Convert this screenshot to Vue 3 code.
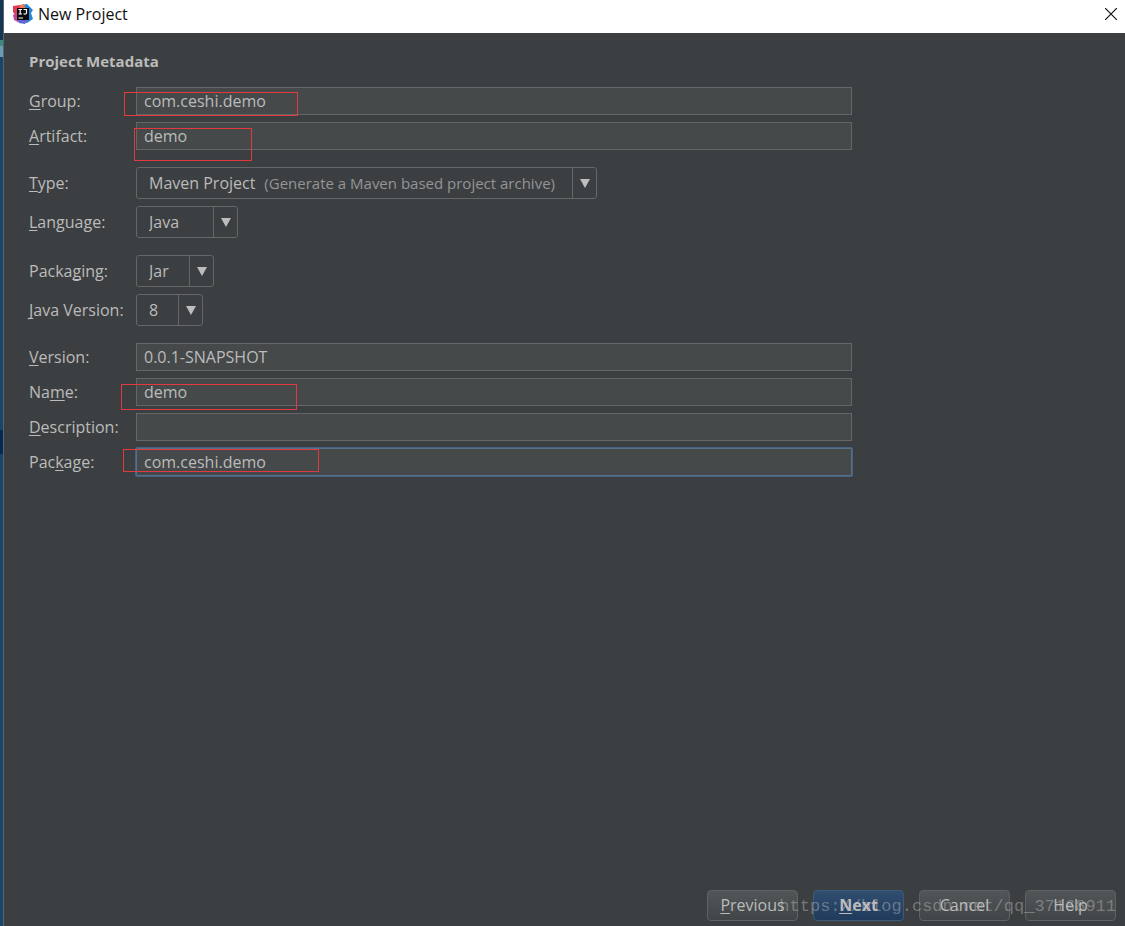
<script setup>
import { reactive } from 'vue'

const form = reactive({
  group: 'com.ceshi.demo',
  artifact: 'demo',
  type: 'Maven Project',
  language: 'Java',
  packaging: 'Jar',
  javaVersion: '8',
  version: '0.0.1-SNAPSHOT',
  name: 'demo',
  description: '',
  pkg: 'com.ceshi.demo',
})

// Each label is split as [before, mnemonic, after].
const sections = [
  [
    { key: 'group', label: ['', 'G', 'roup:'], mark: 'mark-group' },
    { key: 'artifact', label: ['', 'A', 'rtifact:'], mark: 'mark-artifact' },
  ],
  [
    { key: 'type', label: ['', 'T', 'ype:'], size: 'wide', options: ['Maven Project', 'Gradle Project'], note: '(Generate a Maven based project archive)' },
    { key: 'language', label: ['', 'L', 'anguage:'], size: 'medium', options: ['Java', 'Kotlin', 'Groovy'] },
  ],
  [
    { key: 'packaging', label: ['Packa', 'g', 'ing:'], size: 'small', options: ['Jar', 'War'] },
    { key: 'javaVersion', label: ['', 'J', 'ava Version:'], size: 'tiny', options: ['8', '10', '11'] },
  ],
  [
    { key: 'version', label: ['', 'V', 'ersion:'] },
    { key: 'name', label: ['Na', 'm', 'e:'], mark: 'mark-name' },
    { key: 'description', label: ['', 'D', 'escription:'] },
    { key: 'pkg', label: ['Pac', 'k', 'age:'], mark: 'mark-package', active: true },
  ],
]
</script>

<template>
  <div class="desktop">
    <div class="window">
      <header class="titlebar">
        <svg class="logo" viewBox="0 0 20 20" aria-hidden="true">
          <path d="M0 2 7 1 10 5 8 12 3 12 0 8Z" fill="#e23b58" />
          <path d="M8 1 14 0 20 6 18 9 20 15 14 19 8 17Z" fill="#2486dd" />
          <path d="M0 11 5 8 9 17 7 19 1 16Z" fill="#c2479a" />
          <path d="M7 1 11 0 13 6 6 7Z" fill="#f27a52" />
          <path d="M4 15H15L12 20 6 19Z" fill="#6863d5" />
          <rect x="4" y="4" width="12" height="12" fill="#090909" />
          <path d="M5.5 5.5H9M7.2 5.5V10M5.5 10H9M10.5 5.5H13.5V9Q13.5 10.2 11.8 10.2L10.5 9.8M5.5 14H10" fill="none" stroke="#fff" stroke-width="1.2" />
        </svg>
        <h1 class="title">New Project</h1>
        <button class="close" type="button" aria-label="Close">
          <svg viewBox="0 0 12 12" aria-hidden="true"><path d="M0 0 12 12M12 0 0 12" stroke="#111" stroke-width="1.2" /></svg>
        </button>
      </header>

      <form class="content" @submit.prevent>
        <h2 class="heading">Project Metadata</h2>
        <div class="sections">
          <div v-for="(rows, i) in sections" :key="i" class="section">
            <div v-for="row in rows" :key="row.key" class="row">
              <label class="label" :for="row.key">{{ row.label[0] }}<u>{{ row.label[1] }}</u>{{ row.label[2] }}</label>
              <div v-if="row.options" class="combo" :class="row.size">
                <select :id="row.key" v-model="form[row.key]">
                  <option v-for="option in row.options" :key="option">{{ option }}</option>
                </select>
                <span v-if="row.note" class="note">{{ row.note }}</span>
                <span class="arrow" aria-hidden="true"><svg viewBox="0 0 10 9"><path d="M0 0H10L5 9Z" fill="#bbbdbf" /></svg></span>
              </div>
              <div v-else class="field">
                <input :id="row.key" v-model="form[row.key]" type="text" :class="{ active: row.active }" spellcheck="false" />
                <span v-if="row.mark" class="mark" :class="row.mark"></span>
              </div>
            </div>
          </div>
        </div>
      </form>

      <footer class="footer">
        <button type="button"><u>P</u>revious</button>
        <button type="button" class="primary"><u>N</u>ext</button>
        <button type="button">Cancel</button>
        <button type="button">Help</button>
        <span class="watermark">https://blog.csdn.net/qq_37168911</span>
      </footer>
    </div>
  </div>
</template>

<style>
body {
  margin: 0;
}
</style>

<style scoped>
.desktop {
  box-sizing: border-box;
  min-height: 100vh;
  display: flex;
  padding-left: 3px;
  background: linear-gradient(#17354f 0 40px, #3f8a80 40px 46px, #6f9bb0 46px 57px, #1c4465 57px 430px, #08294f 430px 454px, #1c4465 454px);
  font-family: "Open Sans", "Noto Sans", sans-serif;
  font-size: 16px;
  line-height: 20px;
  color: #bbbbbb;
}
.window {
  flex: 1;
  min-width: 0;
  display: flex;
  flex-direction: column;
  border-left: 1px solid #4d6678;
  background: #3c3f41;
}
.titlebar {
  box-sizing: border-box;
  height: 33px;
  display: flex;
  align-items: center;
  padding: 0 8px 5px 9px;
  background: #fff;
  color: #111;
}
.logo {
  width: 20px;
  height: 20px;
  margin-right: 5px;
}
.title {
  flex: 1;
  margin: 0;
  font-size: 16px;
  font-weight: 400;
}
.close {
  width: 12px;
  height: 12px;
  padding: 0;
  border: 0;
  background: none;
}
.close svg {
  display: block;
}
.content {
  flex: 1;
  padding: 18px 25px 24px;
}
.heading {
  margin: 0 0 16px;
  font-size: 15px;
  font-weight: 700;
}
.sections {
  display: grid;
  gap: 17px;
}
.section {
  display: grid;
  gap: 7px;
}
.row {
  display: grid;
  grid-template-columns: 107px minmax(0, 1fr);
  align-items: center;
}
u {
  text-underline-offset: 2px;
  text-decoration-thickness: 1px;
  text-decoration-skip-ink: none;
}
.label {
  white-space: nowrap;
}
.field {
  position: relative;
  max-width: 716px;
}
input {
  box-sizing: border-box;
  display: block;
  width: 100%;
  height: 28px;
  padding: 0 7px;
  border: 1px solid #646667;
  background: #45494a;
  color: #bbbbbb;
  font: inherit;
  outline: none;
}
input.active {
  border-color: #567089;
  border-radius: 1px;
  box-shadow: 0 0 0 1px #466482;
}
.mark {
  position: absolute;
  box-sizing: border-box;
  border: 1px solid #e2393f;
  pointer-events: none;
}
.mark-group {
  left: -12px;
  top: 5px;
  width: 174px;
  height: 24px;
}
.mark-artifact {
  left: -2px;
  top: 6px;
  width: 118px;
  height: 33px;
}
.mark-name {
  left: -15px;
  top: 6px;
  width: 176px;
  height: 26px;
}
.mark-package {
  left: -13px;
  top: 1px;
  width: 196px;
  height: 23px;
}
.combo {
  position: relative;
  max-width: 100%;
}
.wide {
  width: 461px;
}
.medium {
  width: 102px;
}
.small {
  width: 78px;
}
.tiny {
  width: 67px;
}
select {
  box-sizing: border-box;
  display: block;
  width: 100%;
  height: 32px;
  padding: 0 24px 0 12px;
  border: 1px solid #646667;
  border-radius: 3px;
  background: #3c3f41;
  color: #bbbbbb;
  font: inherit;
  appearance: none;
  outline: none;
}
.note {
  position: absolute;
  top: 0;
  right: 42px;
  font-size: 15px;
  line-height: 32px;
  color: #939596;
  white-space: nowrap;
  pointer-events: none;
}
.arrow {
  position: absolute;
  top: 1px;
  right: 1px;
  bottom: 1px;
  width: 23px;
  display: flex;
  align-items: center;
  justify-content: center;
  border-left: 1px solid #646667;
  pointer-events: none;
}
.arrow svg {
  width: 10px;
  height: 9px;
}
.footer {
  position: relative;
  display: flex;
  justify-content: flex-end;
  gap: 15px;
  padding: 0 9px 5px;
}
.footer button {
  width: 91px;
  height: 31px;
  padding: 0 0 2px;
  border: 1px solid #5e6263;
  border-radius: 4px;
  background: linear-gradient(#515658, #414547);
  color: #bbbbbb;
  font: inherit;
}
.footer .primary {
  border-color: #3d5a78;
  background: linear-gradient(#304d70, #203b5c);
  font-weight: 700;
}
.watermark {
  position: absolute;
  right: 9px;
  top: 0;
  font-family: "Liberation Mono", monospace;
  font-size: 17px;
  line-height: 33px;
  color: rgba(190, 190, 190, 0.45);
  pointer-events: none;
}
</style>
